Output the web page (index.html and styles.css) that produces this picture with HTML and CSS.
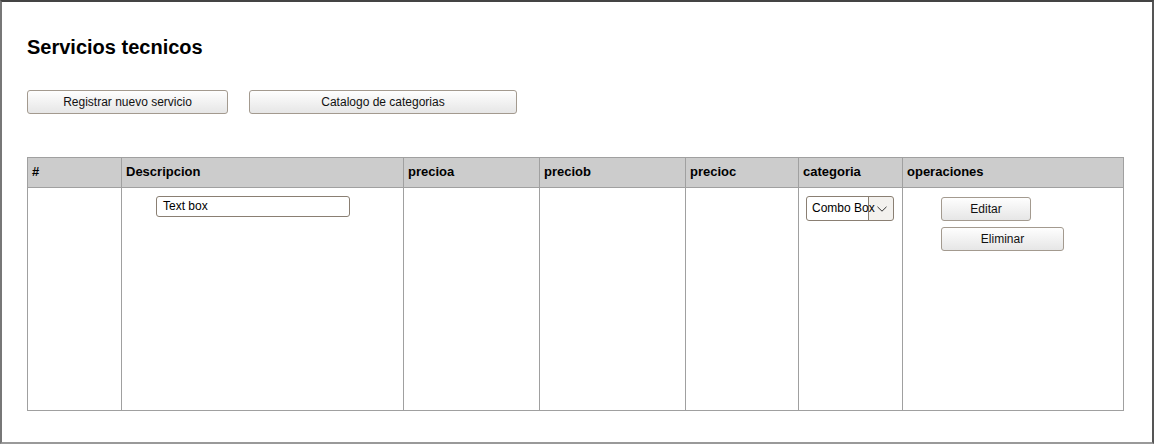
FILE: index.html
```html
<!DOCTYPE html>
<html>
<head>
<meta charset="utf-8">
<link rel="stylesheet" href="styles.css">
</head>
<body>
<div class="frame">
  <h1 class="title">Servicios tecnicos</h1>
  <div class="actions">
    <button class="btn btn-reg">Registrar nuevo servicio</button>
    <button class="btn btn-cat">Catalogo de categorias</button>
  </div>
  <table class="grid">
    <colgroup>
      <col class="c1"><col class="c2"><col class="c3"><col class="c4"><col class="c5"><col class="c6"><col class="c7">
    </colgroup>
    <thead>
      <tr>
        <th>#</th><th>Descripcion</th><th>precioa</th><th>preciob</th><th>precioc</th><th>categoria</th><th>operaciones</th>
      </tr>
    </thead>
    <tbody>
      <tr class="body-row">
        <td></td>
        <td class="desc"><div class="textbox">Text box</div></td>
        <td></td>
        <td></td>
        <td></td>
        <td class="cat"><div class="combo"><span class="combo-text">Combo Box</span><span class="combo-arrow"><svg width="10" height="6" viewBox="0 0 10 6"><path d="M0.5 0.8 L5 5.2 L9.5 0.8" fill="none" stroke="#333" stroke-width="1"/></svg></span></div></td>
        <td class="ops">
          <button class="btn btn-edit">Editar</button>
          <button class="btn btn-del">Eliminar</button>
        </td>
      </tr>
    </tbody>
  </table>
</div>
</body>
</html>
```

FILE: styles.css
```css
html, body {
  margin: 0;
  padding: 0;
  background: #fff;
}
body {
  font-family: "Liberation Sans", Arial, sans-serif;
  color: #000;
}
.frame {
  width: 1154px;
  height: 444px;
  box-sizing: border-box;
  border-top: 2px solid #444;
  border-left: 2px solid #777;
  border-right: 2px solid #555;
  border-bottom: 2px solid #999;
  padding: 0 0 0 25px;
  overflow: hidden;
}
.title {
  margin: 0;
  padding-top: 33px;
  font-size: 20px;
  line-height: 24px;
  font-weight: bold;
}
.actions {
  display: flex;
  gap: 21px;
  margin-top: 31px;
}
.btn {
  font-family: "Liberation Sans", Arial, sans-serif;
  font-size: 12px;
  color: #111;
  background: linear-gradient(#fefefe, #e6e6e6);
  border: 1px solid #a39a8f;
  border-radius: 3px;
  height: 24px;
  padding: 0;
  margin: 0;
  display: block;
}
.btn-reg { width: 201px; }
.btn-cat { width: 268px; }
.grid {
  margin-top: 43px;
  border-collapse: collapse;
  table-layout: fixed;
  width: 1096px;
}
.c1 { width: 94px; }
.c2 { width: 282px; }
.c3 { width: 136px; }
.c4 { width: 146px; }
.c5 { width: 113px; }
.c6 { width: 104px; }
.c7 { width: 221px; }
.grid th, .grid td {
  border: 1px solid #a0a0a0;
  padding: 0;
  vertical-align: top;
  text-align: left;
}
.grid th {
  background: #cccccc;
  height: 27px;
  font-size: 13px;
  line-height: 15px;
  font-weight: bold;
  padding: 0 0 2px 4px;
  vertical-align: middle;
}
.body-row {
  height: 223px;
}
.desc {
  padding: 8px 0 0 34px !important;
}
.textbox {
  width: 186px;
  height: 19px;
  border: 1px solid #8a7f73;
  border-radius: 3px;
  font-size: 12px;
  line-height: 19px;
  padding-left: 6px;
  box-sizing: content-box;
}
.cat {
  padding: 8px 0 0 7px !important;
}
.combo {
  position: relative;
  display: flex;
  width: 88px;
  height: 25px;
  border: 1px solid #8a7f73;
  border-radius: 3px;
  box-sizing: border-box;
  font-size: 12px;
  background: linear-gradient(90deg, #fff 61px, #f3f1ee 61px);
}
.combo-text {
  position: relative;
  z-index: 1;
  width: 62px;
  padding-left: 5px;
  line-height: 23px;
  white-space: nowrap;
  box-sizing: border-box;
  border-right: 1px solid #8a7f73;
}
.combo-arrow {
  flex: 1;
  display: flex;
  align-items: center;
  padding-left: 8px;
  padding-top: 1px;
}
.ops {
  padding: 9px 0 0 38px !important;
}
.btn-edit { width: 90px; height: 24px; }
.btn-del { width: 123px; height: 24px; margin-top: 6px; }
```
